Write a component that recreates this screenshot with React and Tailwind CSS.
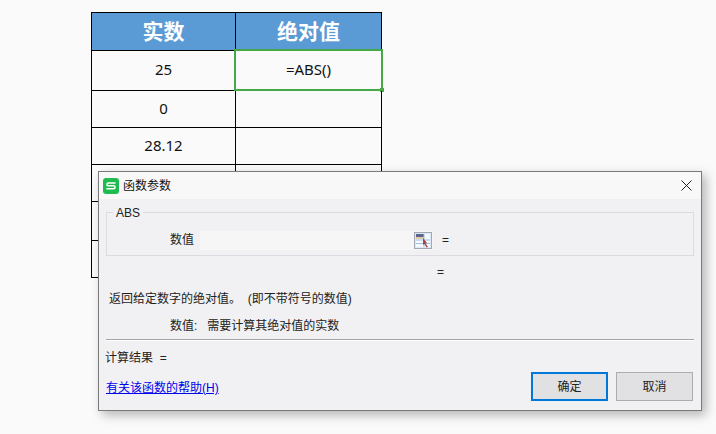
const rows = [
  { value: "25", formula: "=ABS()", height: "h-[40px]" },
  { value: "0", formula: "", height: "h-[37px]" },
  { value: "28.12", formula: "", height: "h-[37px]" },
  { value: "", formula: "", height: "h-[37px]" },
  { value: "", formula: "", height: "h-[39px]" },
  { value: "", formula: "", height: "h-[37px]" },
];

function SheetTable() {
  return (
    <div className="w-[291px] ml-[91px] border-t border-l border-black font-['Noto_Sans','Noto_Sans_CJK_SC',sans-serif]">
      <div className="flex h-[38px] bg-[#5b9bd5] text-white text-[21px] font-bold">
        <div className="w-[144px] flex items-center justify-center border-r border-b border-black">实数</div>
        <div className="flex-1 flex items-center justify-center border-r border-b border-black">绝对值</div>
      </div>
      {rows.map((row, i) => (
        <div key={i} className={`flex ${row.height} text-[15px] text-[#111]`}>
          <div className="w-[144px] flex items-center justify-center pb-[2px] border-r border-b border-black">{row.value}</div>
          <div className="flex-1 flex items-center justify-center pb-[2px] border-r border-b border-black relative">
            {row.formula}
            {i === 0 && (
              <>
                <div className="absolute -left-[2px] -top-[2px] -right-[2px] -bottom-px border-2 border-[#45a847]" />
                <div className="absolute -right-[3px] -bottom-[2px] w-[4px] h-[4px] bg-[#45a847]" />
              </>
            )}
          </div>
        </div>
      ))}
    </div>
  );
}

function WpsLogo() {
  return (
    <svg width="16" height="16" viewBox="0 0 16 16">
      <rect width="16" height="16" rx="3" fill="#1fbb4f" />
      <path d="M12 5H5.2C3.6 5 3.6 7.8 5.2 7.8H10.8C12.4 7.8 12.4 10.8 10.8 10.8H4" fill="none" stroke="#fff" strokeWidth="1.6" strokeLinecap="round" />
    </svg>
  );
}

function RefPicker() {
  return (
    <svg width="18" height="17" viewBox="0 0 18 17" className="shrink-0">
      <rect x="0.5" y="0.5" width="17" height="16" fill="#dbe8f6" stroke="#a3a8b0" />
      <rect x="2" y="2" width="14" height="13" fill="#f5f8fc" />
      <rect x="2" y="2" width="8" height="3" fill="#5a6690" />
      <rect x="2" y="5" width="8" height="2" fill="#e3c9a0" />
      <path d="M10 2V15M2 8H16M2 11.5H16" stroke="#9cc0e4" strokeWidth="1" />
      <path d="M9 6L13 11L11.5 11.3L14 15L12.5 15.5L10.5 12L9 13Z" fill="#a8443c" />
    </svg>
  );
}

function ParamDialog() {
  return (
    <div className="absolute left-[98px] top-[171px] w-[604px] h-[240px] border border-[#7a7a7a] bg-[#f1f1f3] shadow-[4px_4px_10px_rgba(0,0,0,0.28)] flex flex-col text-[12px] text-[#222]">
      <div className="h-[27px] bg-[#f8f8f8] flex items-center pl-[4px] pr-[9px] shrink-0">
        <WpsLogo />
        <span className="ml-[4px] text-[#111]">函数参数</span>
        <svg width="11" height="11" viewBox="0 0 11 11" className="ml-auto">
          <path d="M0.5 0.5L10.5 10.5M10.5 0.5L0.5 10.5" stroke="#222" strokeWidth="1" fill="none" />
        </svg>
      </div>

      <div className="relative mt-[13px] mx-[7px] h-[44px] border border-[#dcdce0] flex items-end pb-[5px] shrink-0">
        <span className="absolute left-[6px] -top-[8px] px-[3px] bg-[#f1f1f3] leading-[16px]">ABS</span>
        <span className="ml-[63px] w-[25px] leading-[19px]">数值</span>
        <div className="ml-[5px] w-[233px] h-[19px] bg-[#f6f6f6] flex items-center justify-end pr-[1px]">
          <RefPicker />
        </div>
        <span className="ml-[9px] leading-[19px]">=</span>
      </div>

      <div className="pl-[338px] mt-[8px] leading-[16px]">=</div>
      <div className="pl-[10px] mt-[10px] leading-[18px]">返回给定数字的绝对值。&nbsp;&nbsp;(即不带符号的数值)</div>
      <div className="pl-[71px] mt-[9px] leading-[18px]">数值:&nbsp;&nbsp;&nbsp;需要计算其绝对值的实数</div>
      <div className="mx-[7px] mt-[4px] border-t border-[#a6a6a6] shadow-[0_1px_0_#fff]" />

      <div className="flex-1 flex mx-[7px]">
        <div className="flex flex-col">
          <span className="mt-[9px] leading-[18px] -ml-px">计算结果&nbsp;&nbsp;=</span>
          <a href="#" className="mt-[12px] leading-[18px] text-[#0000ee] underline">有关该函数的帮助(H)</a>
        </div>
        <div className="ml-auto mr-px mt-[32px] flex gap-[8px]">
          <button className="w-[77px] h-[29px] border-2 border-[#0078d7] bg-[#e1e1e3]">确定</button>
          <button className="w-[77px] h-[29px] border border-[#adadad] bg-[#e1e1e3]">取消</button>
        </div>
      </div>
    </div>
  );
}

export default function App() {
  return (
    <div className="relative w-[716px] h-[434px] bg-[#fafafa] pt-[12px] overflow-hidden font-['Liberation_Sans','Noto_Sans_CJK_SC',sans-serif]">
      <SheetTable />
      <ParamDialog />
    </div>
  );
}
